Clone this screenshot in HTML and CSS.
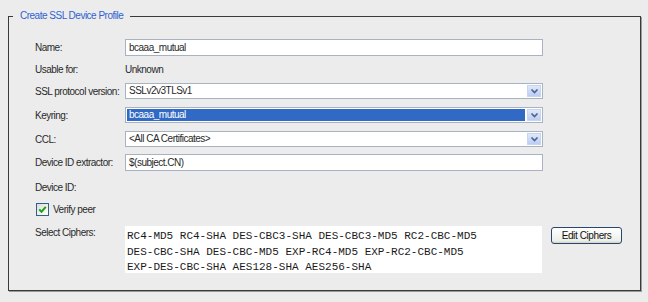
FILE: index.html
```html
<!DOCTYPE html>
<html>
<head>
<meta charset="utf-8">
<link rel="stylesheet" href="styles.css">
</head>
<body>
<fieldset class="group">
  <legend class="group-title">Create SSL Device Profile</legend>
  <div class="form">
    <div class="row row-input">
      <div class="label">Name:</div>
      <div class="field"><div class="textbox">bcaaa_mutual</div></div>
    </div>
    <div class="row row-text">
      <div class="label">Usable for:</div>
      <div class="field"><div class="plain">Unknown</div></div>
    </div>
    <div class="row row-select">
      <div class="label">SSL protocol version:</div>
      <div class="field">
        <div class="select"><span class="select-value">SSLv2v3TLSv1</span><span class="arrow"><svg width="9" height="6" viewBox="0 0 9 6"><path d="M1.5 1.5 L4.5 4.5 L7.5 1.5" fill="none" stroke="#4d6185" stroke-width="1.6"/></svg></span></div>
      </div>
    </div>
    <div class="row row-select">
      <div class="label">Keyring:</div>
      <div class="field">
        <div class="select"><span class="select-value selected">bcaaa_mutual</span><span class="arrow"><svg width="9" height="6" viewBox="0 0 9 6"><path d="M1.5 1.5 L4.5 4.5 L7.5 1.5" fill="none" stroke="#4d6185" stroke-width="1.6"/></svg></span></div>
      </div>
    </div>
    <div class="row row-select">
      <div class="label">CCL:</div>
      <div class="field">
        <div class="select"><span class="select-value">&lt;All CA Certificates&gt;</span><span class="arrow"><svg width="9" height="6" viewBox="0 0 9 6"><path d="M1.5 1.5 L4.5 4.5 L7.5 1.5" fill="none" stroke="#4d6185" stroke-width="1.6"/></svg></span></div>
      </div>
    </div>
    <div class="row row-input">
      <div class="label">Device ID extractor:</div>
      <div class="field"><div class="textbox">$(subject.CN)</div></div>
    </div>
    <div class="row row-text row-deviceid">
      <div class="label">Device ID:</div>
      <div class="field"></div>
    </div>
    <div class="row row-check">
      <span class="checkbox"><svg width="9" height="9" viewBox="0 0 9 9"><path d="M1.2 4.4 L3.5 6.7 L7.8 1.8" fill="none" stroke="#21a121" stroke-width="2"/></svg></span>
      <span class="check-label">Verify peer</span>
    </div>
    <div class="row row-ciphers">
      <div class="label label-ciphers">Select Ciphers:</div>
      <div class="field ciphers-field">
        <div class="ciphers">RC4-MD5 RC4-SHA DES-CBC3-SHA DES-CBC3-MD5 RC2-CBC-MD5<br>DES-CBC-SHA DES-CBC-MD5 EXP-RC4-MD5 EXP-RC2-CBC-MD5<br>EXP-DES-CBC-SHA AES128-SHA AES256-SHA</div>
        <button class="button">Edit Ciphers</button>
      </div>
    </div>
  </div>
</fieldset>
</body>
</html>
```

FILE: styles.css
```css
html, body {
  margin: 0;
  padding: 0;
  background: #ececec;
}
body {
  width: 648px;
  height: 302px;
  font-family: "Liberation Sans", Arial, sans-serif;
  font-size: 10px;
  letter-spacing: -0.5px;
  color: #2a2a2a;
  padding-top: 10px;
  box-sizing: border-box;
}
.group {
  margin: 0 0 0 8px;
  width: 633px;
  height: 281px;
  box-sizing: border-box;
  padding: 0;
  border: 1px solid #3a3a3a;
  box-shadow: 1px 1px 0 #9a9a9a;
  min-width: 0;
}
.group-title {
  margin-left: 4px;
  padding: 0 7px 0 7px;
  color: #2f62d0;
  font-size: 10px;
  line-height: 12px;
  height: 12px;
}
.form {
  padding: 17px 0 0 26px;
  display: flex;
  flex-direction: column;
}
.row {
  display: flex;
  align-items: center;
}
.label {
  width: 90px;
  flex: none;
}
.field {
  flex: none;
  width: 418px;
}
.row-input {
  height: 17px;
  margin-bottom: 7px;
}
.row-text {
  height: 13px;
  margin-bottom: 7px;
}
.row-select {
  height: 16px;
  margin-bottom: 8px;
}
.row-select:nth-of-type(5) {
  margin-bottom: 7px;
}
.textbox {
  height: 17px;
  box-sizing: border-box;
  border: 1px solid #a7b3c2;
  background: #fff;
  padding: 0 3px;
  line-height: 15px;
  font-size: 10px;
}
.plain {
  padding-left: 0;
  line-height: 13px;
}
.select {
  height: 16px;
  box-sizing: border-box;
  border: 1px solid #a7b3c2;
  background: #fff;
  display: flex;
  align-items: stretch;
  padding: 1px;
}
.select-value {
  flex: 1;
  padding: 0 2px;
  line-height: 12px;
}
.select-value.selected {
  background: #316ac5;
  color: #fff;
  margin-right: 2px;
}
.arrow {
  width: 14px;
  flex: none;
  box-sizing: border-box;
  background: linear-gradient(#dfe8fb, #bccdf3);
  border: 1px solid #c8d5ef;
  display: flex;
  align-items: center;
  justify-content: center;
}
.row-deviceid {
  margin-top: 3px;
  margin-bottom: 9px;
}
.row-check {
  height: 13px;
  margin-left: 1px;
  margin-bottom: 10px;
}
.checkbox {
  width: 13px;
  height: 13px;
  box-sizing: border-box;
  border: 1px solid #2c628b;
  background: linear-gradient(135deg, #dcdcd6, #ffffff);
  display: flex;
  align-items: center;
  justify-content: center;
  margin-right: 4px;
}
.row-ciphers {
  align-items: flex-start;
}
.label-ciphers {
  margin-top: 1px;
}
.ciphers-field {
  display: flex;
  align-items: flex-start;
  width: 500px;
}
.ciphers {
  width: 417px;
  height: 47px;
  box-sizing: border-box;
  background: #fff;
  padding: 3px 0 0 2px;
  font-family: "Liberation Mono", "Courier New", monospace;
  font-size: 11px;
  line-height: 15.5px;
  letter-spacing: 0;
  color: #1a1a1a;
}
.button {
  margin: 1px 0 0 9px;
  width: 71px;
  height: 17px;
  box-sizing: border-box;
  border: 1px solid #27476e;
  border-radius: 3px;
  background: linear-gradient(#ffffff, #eeeee8 85%, #d6d0c5);
  font-family: "Liberation Sans", Arial, sans-serif;
  font-size: 10px;
  letter-spacing: -0.4px;
  color: #111;
  padding: 0;
}
```
